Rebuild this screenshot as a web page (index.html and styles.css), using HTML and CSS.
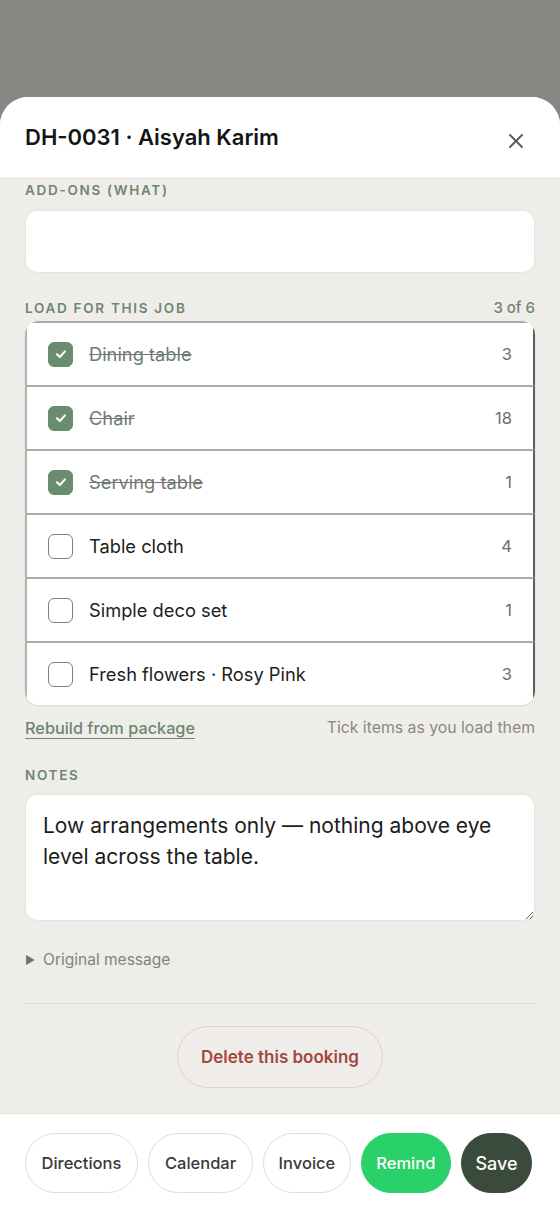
FILE: index.html
```html
<!DOCTYPE html>
<html lang="en">
<head>
<meta charset="utf-8">
<title>DH-0031 · Aisyah Karim</title>
<link rel="stylesheet" href="styles.css">
</head>
<body>
<div class="backdrop"></div>
<div class="sheet">
  <header class="sheet-head">
    <h1 class="title">DH-0031 · Aisyah Karim</h1>
    <button class="close" aria-label="Close">
      <svg width="16" height="16" viewBox="0 0 16 16"><path d="M2 2 L14 14 M14 2 L2 14" stroke="#5a5d58" stroke-width="2" stroke-linecap="round" fill="none"/></svg>
    </button>
  </header>
  <main class="sheet-body">
    <div class="label">ADD-ONS (WHAT)</div>
    <div class="input"></div>

    <div class="label-row">
      <span class="label">LOAD FOR THIS JOB</span>
      <span class="progress">3 of 6</span>
    </div>
    <ul class="load">
      <li class="item done"><span class="box"><svg width="14" height="14" viewBox="0 0 14 14"><path d="M3 7.3 L5.8 10 L11 4.3" stroke="#fff" stroke-width="2" fill="none" stroke-linecap="round" stroke-linejoin="round"/></svg></span><span class="name">Dining table</span><span class="qty">3</span></li>
      <li class="item done"><span class="box"><svg width="14" height="14" viewBox="0 0 14 14"><path d="M3 7.3 L5.8 10 L11 4.3" stroke="#fff" stroke-width="2" fill="none" stroke-linecap="round" stroke-linejoin="round"/></svg></span><span class="name">Chair</span><span class="qty">18</span></li>
      <li class="item done"><span class="box"><svg width="14" height="14" viewBox="0 0 14 14"><path d="M3 7.3 L5.8 10 L11 4.3" stroke="#fff" stroke-width="2" fill="none" stroke-linecap="round" stroke-linejoin="round"/></svg></span><span class="name">Serving table</span><span class="qty">1</span></li>
      <li class="item"><span class="box"></span><span class="name">Table cloth</span><span class="qty">4</span></li>
      <li class="item"><span class="box"></span><span class="name">Simple deco set</span><span class="qty">1</span></li>
      <li class="item"><span class="box"></span><span class="name">Fresh flowers · Rosy Pink</span><span class="qty">3</span></li>
    </ul>
    <div class="load-foot">
      <a class="rebuild" href="#">Rebuild from package</a>
      <span class="hint">Tick items as you load them</span>
    </div>

    <div class="label notes-label">NOTES</div>
    <textarea class="notes">Low arrangements only — nothing above eye level across the table.</textarea>

    <div class="original"><span class="tri">▶</span>Original message</div>
    <hr class="divider">
    <div class="danger-wrap"><button class="danger">Delete this booking</button></div>
  </main>
  <footer class="sheet-foot">
    <button class="pill directions">Directions</button>
    <button class="pill calendar">Calendar</button>
    <button class="pill invoice">Invoice</button>
    <button class="pill remind">Remind</button>
    <button class="pill save">Save</button>
  </footer>
</div>
</body>
</html>
```
FILE: styles.css
```css
* { box-sizing: border-box; }
html, body { margin: 0; padding: 0; }
body {
  width: 560px;
  height: 1212px;
  overflow: hidden;
  background: #848782;
  font-family: "Inter", "Liberation Sans", sans-serif;
  color: #1f201e;
}
.backdrop { height: 97px; }
.sheet {
  height: 1115px;
  display: flex;
  flex-direction: column;
  background: #efede9;
  border-radius: 28px 28px 0 0;
  overflow: hidden;
}
.sheet-head {
  height: 82px;
  flex: none;
  background: #fff;
  border-bottom: 1px solid #e4e1dc;
  display: flex;
  align-items: center;
  justify-content: space-between;
  padding: 0 36px 0 25px;
}
.title {
  margin: 0;
  font-size: 22px;
  font-weight: 600;
  letter-spacing: 0;
  color: #151614;
  margin-top: -2px;
}
.close {
  border: 0;
  background: none;
  padding: 0;
  width: 16px;
  height: 16px;
  display: flex;
  align-items: center;
  justify-content: center;
  margin-top: 6px;
}
.sheet-body {
  flex: 1;
  overflow: hidden;
  padding: 3px 25px 0 25px;
}
.label {
  font-size: 13.5px;
  font-weight: 600;
  letter-spacing: 1.7px;
  color: #6e8670;
  line-height: 16px;
}
.input {
  margin-top: 12px;
  height: 63px;
  background: #fff;
  border: 1px solid #e6e3de;
  border-radius: 12px;
}
.label-row {
  margin-top: 27px;
  display: flex;
  justify-content: space-between;
  align-items: center;
  line-height: 16px;
}
.progress {
  font-size: 15px;
  color: #6e8670;
  font-weight: 500;
}
.load {
  list-style: none;
  margin: 5px 0 0 0;
  padding: 0;
  background: #fff;
  border-radius: 14px;
  overflow: hidden;
  box-shadow: 0 1px 2px rgba(0,0,0,0.08);
}
.item {
  height: 64px;
  display: flex;
  align-items: center;
  padding: 0 21px 0 21px;
  border-top: 2px solid #a9a9a7;
  border-left: 2px solid #b3b3b1;
  border-right: 2px solid #5c5c5a;
}
.box {
  width: 25px;
  height: 25px;
  flex: none;
  border: 1.5px solid #7d7f7b;
  border-radius: 6px;
  display: flex;
  align-items: center;
  justify-content: center;
  margin-right: 16px;
}
.done .box {
  background: #6a8c6f;
  border-color: #6a8c6f;
}
.name {
  flex: 1;
  font-size: 18.3px;
  color: #1d1e1c;
}
.done .name {
  color: #6f7a6f;
  text-decoration: line-through;
}
.qty {
  font-size: 16.5px;
  color: #6c6e6a;
}
.load-foot {
  margin-top: 13px;
  display: flex;
  justify-content: space-between;
  align-items: center;
  line-height: 20px;
}
.rebuild {
  font-size: 16.3px;
  color: #6e8670;
  font-weight: 500;
  text-decoration: underline;
  text-underline-offset: 4px;
  text-decoration-thickness: 1px;
}
.hint {
  font-size: 15.8px;
  color: #888985;
}
.notes-label { margin-top: 29px; }
.notes {
  display: block;
  margin-top: 11px;
  width: 100%;
  height: 127px;
  background: #fff;
  border: 1px solid #e6e3de;
  border-radius: 12px;
  padding: 15px 17px;
  font-family: "Inter", "Liberation Sans", sans-serif;
  font-size: 21px;
  line-height: 31px;
  color: #1b1c1a;
  resize: vertical;
  outline: none;
}
.original {
  margin-top: 29px;
  font-size: 15.5px;
  color: #81837f;
  line-height: 20px;
  display: flex;
  align-items: center;
}
.tri {
  font-size: 11px;
  color: #70726e;
  margin-right: 8px;
}
.divider {
  margin: 33px -3px 0 -3px;
  border: 0;
  border-top: 1px solid #dedbd6;
}
.danger-wrap {
  display: flex;
  justify-content: center;
  margin-top: 22px;
}
.danger {
  height: 62px;
  padding: 0 23px;
  border-radius: 31px;
  border: 1.5px solid #e4cfca;
  background: transparent;
  font-family: "Inter", "Liberation Sans", sans-serif;
  font-size: 17px;
  font-weight: 600;
  color: #a6473e;
}
.sheet-foot {
  flex: none;
  height: 99px;
  background: #fff;
  border-top: 1px solid #e4e1dc;
  display: flex;
  gap: 10px;
  padding: 19px 25px 0 25px;
  align-items: flex-start;
}
.pill {
  height: 60px;
  padding: 0 15.5px;
  border-radius: 30px;
  border: 1px solid #e1ded9;
  background: #fff;
  font-family: "Inter", "Liberation Sans", sans-serif;
  font-size: 16.5px;
  font-weight: 500;
  color: #383a37;
  flex: none;
}
.calendar { padding: 0 16px; }
.invoice { padding: 0 14.5px; }
.remind {
  padding: 0 14.5px;
  background: #2ad06a;
  border-color: #2ad06a;
  color: #fff;
}
.save {
  background: #3a4a3b;
  border-color: #3a4a3b;
  color: #fff;
  font-size: 18px;
  padding: 0 13.5px;
}
```
